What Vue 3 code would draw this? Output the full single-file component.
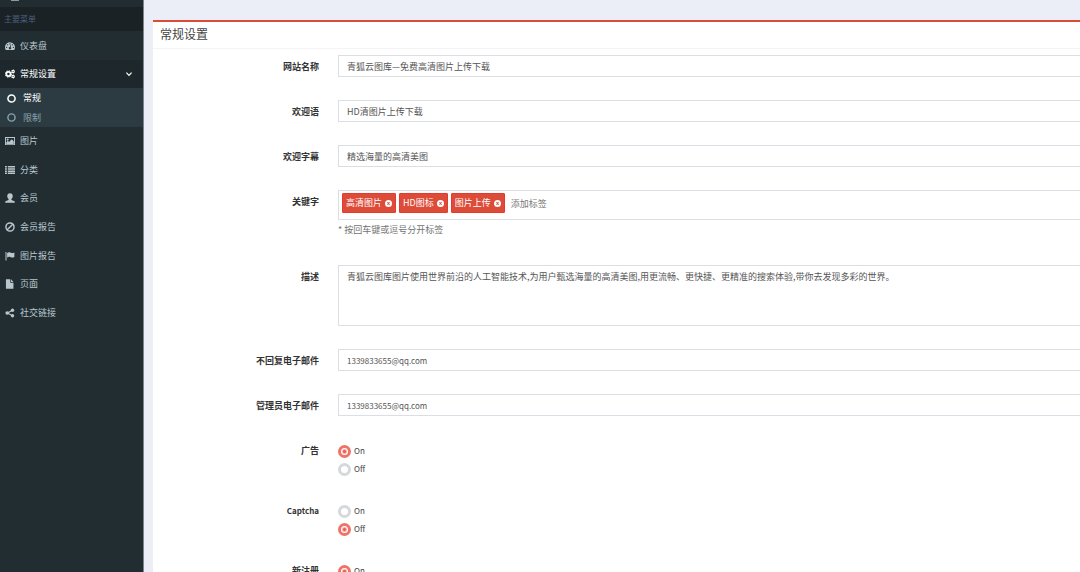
<script setup>
import { reactive } from 'vue'

const items = [
  { icon: 'image', label: '图片' },
  { icon: 'list', label: '分类' },
  { icon: 'user', label: '会员' },
  { icon: 'ban', label: '会员报告' },
  { icon: 'flag', label: '图片报告' },
  { icon: 'file', label: '页面' },
  { icon: 'share', label: '社交链接' },
]

const form = reactive({
  name: '青狐云图库—免费高清图片上传下载',
  welcome: 'HD清图片上传下载',
  subtitle: '精选海量的高清美图',
  tags: ['高清图片', 'HD图标', '图片上传'],
  description:
    '青狐云图库图片使用世界前沿的人工智能技术,为用户甄选海量的高清美图,用更流畅、更快捷、更精准的搜索体验,带你去发现多彩的世界。',
  noReply: '1339833655@qq.com',
  admin: '1339833655@qq.com',
  ads: 'On',
  captcha: 'Off',
  register: 'On',
})

const textRows = [
  { key: 'name', label: '网站名称' },
  { key: 'welcome', label: '欢迎语' },
  { key: 'subtitle', label: '欢迎字幕' },
]
const mailRows = [
  { key: 'noReply', label: '不回复电子邮件' },
  { key: 'admin', label: '管理员电子邮件' },
]
const radioRows = [
  { key: 'ads', label: '广告' },
  { key: 'captcha', label: 'Captcha', latin: true },
  { key: 'register', label: '新注册' },
]
</script>

<template>
  <div class="app">
    <aside class="sidebar">
      <div class="user-panel"><span class="avatar"></span></div>
      <div class="menu-header">主要菜单</div>
      <nav>
        <a href="#" class="item">
          <svg class="icon" viewBox="0 0 16 16"><path fill-rule="evenodd" d="M8 2a8 8 0 0 0-8 8c0 1.600.500 3 1.300 4.200h13.400A8 8 0 0 0 8 2zM8 3.500a1.100 1.100 0 1 1 0 2.200 1.100 1.100 0 0 1 0-2.200zM4.200 5a1.100 1.100 0 1 1 0 2.200 1.100 1.100 0 0 1 0-2.200zM11.800 5a1.100 1.100 0 1 1 0 2.200 1.100 1.100 0 0 1 0-2.200zM2.500 9a1.100 1.100 0 1 1 0 2.200A1.100 1.100 0 0 1 2.500 9zM13.500 9a1.100 1.100 0 1 1 0 2.200 1.100 1.100 0 0 1 0-2.200zM8.600 6.500l1 .3-.6 3a1.900 1.900 0 1 1-1.200-.3z" /></svg>
          <span>仪表盘</span>
        </a>
        <a href="#" class="item open">
          <svg class="icon" viewBox="0 0 16 16">
            <circle cx="5.500" cy="8" r="3.400" fill="none" stroke="currentColor" stroke-width="2.900" />
            <circle cx="5.500" cy="8" r="5.200" fill="none" stroke="currentColor" stroke-width="1.500" stroke-dasharray="2.080 2" />
            <circle cx="13" cy="4" r="1.800" fill="none" stroke="currentColor" stroke-width="1.700" />
            <circle cx="13" cy="4" r="2.700" fill="none" stroke="currentColor" stroke-width="1" stroke-dasharray="1.400 1.430" />
            <circle cx="13" cy="12" r="1.800" fill="none" stroke="currentColor" stroke-width="1.700" />
            <circle cx="13" cy="12" r="2.700" fill="none" stroke="currentColor" stroke-width="1" stroke-dasharray="1.400 1.430" />
          </svg>
          <span>常规设置</span>
          <svg class="chevron" viewBox="0 0 10 10"><path d="M2.400 3.700L5 6.300l2.600-2.600" fill="none" stroke="currentColor" stroke-width="1.200" /></svg>
        </a>
        <div class="submenu">
          <a href="#" class="sub current">
            <svg class="dot" viewBox="0 0 10 10"><circle cx="5" cy="5" r="4" fill="none" stroke="currentColor" stroke-width="1.700" /></svg>
            <span>常规</span>
          </a>
          <a href="#" class="sub">
            <svg class="dot" viewBox="0 0 10 10"><circle cx="5" cy="5" r="4" fill="none" stroke="currentColor" stroke-width="1.600" /></svg>
            <span>限制</span>
          </a>
        </div>
        <div class="rest">
          <a v-for="it in items" :key="it.icon" href="#" class="item">
            <svg class="icon" viewBox="0 0 16 16">
              <path v-if="it.icon === 'image'" fill-rule="evenodd" d="M0 1.500h16v13H0zM1.500 3v10h13V3zM4.200 4a1.700 1.700 0 1 1 0 3.400A1.700 1.700 0 0 1 4.200 4zM2 12.600V10l2.500-2.500 2 2L10.700 5 14 8.300v4.300z" />
              <path v-else-if="it.icon === 'list'" d="M0 1.600h3v2.400H0zM4.500 1.600H16v2.400H4.500zM0 5.100h3v2.400H0zM4.500 5.100H16v2.400H4.500zM0 8.600h3V11H0zM4.500 8.600H16V11H4.500zM0 12.100h3v2.400H0zM4.500 12.100H16v2.400H4.500z" />
              <path v-else-if="it.icon === 'user'" d="M8 .3c2.800 0 4.400 1.800 4.400 4.400 0 2-.9 3.700-2.200 4.700v1.100c0 .6.400.9 1 1.100l3.200 1.100c.9.300 1.300.9 1.300 1.700v1.200H.3v-1.200c0-.8.400-1.400 1.300-1.700l3.200-1.100c.6-.2 1-.5 1-1.100V9.400C4.500 8.400 3.600 6.700 3.600 4.700 3.600 2.100 5.200.3 8 .3z" />
              <g v-else-if="it.icon === 'ban'" fill="none" stroke="currentColor" stroke-width="2.300"><circle cx="8" cy="8" r="6.500" /><path d="M3.500 12.500l9-9" /></g>
              <path v-else-if="it.icon === 'flag'" d="M.8 1.500h1.600v13.500H.8zM3.400 3c2.300-1.300 4-1.200 5.800-.2 1.800.9 3.500.8 5.800-.6v7.300c-2.300 1.300-4 1.400-5.800.5-1.800-1-3.500-.9-5.800.5z" />
              <path v-else-if="it.icon === 'file'" d="M1.500.5h7V6h5v9.500h-12zM9.700.5l3.800 4.300H9.700z" />
              <g v-else><path d="M12 3.500L4 8l8 4.500" fill="none" stroke="currentColor" stroke-width="1.800" /><circle cx="12" cy="3.600" r="2.700" /><circle cx="3.500" cy="8" r="2.900" /><circle cx="12" cy="12.400" r="2.700" /></g>
            </svg>
            <span>{{ it.label }}</span>
          </a>
        </div>
      </nav>
    </aside>

    <main class="content">
      <section class="box">
        <h1 class="title">常规设置</h1>
        <form class="form" @submit.prevent>
          <div v-for="r in textRows" :key="r.key" class="group">
            <label class="label" :for="r.key">{{ r.label }}</label>
            <input :id="r.key" v-model="form[r.key]" class="control" type="text" />
          </div>
          <div class="group">
            <label class="label" for="tags">关键字</label>
            <div>
              <div class="tagbox">
                <span v-for="t in form.tags" :key="t" class="tag">
                  {{ t }}
                  <button type="button" class="remove" :aria-label="'移除 ' + t">
                    <svg viewBox="0 0 10 10"><circle cx="5" cy="5" r="5" fill="#fff" /><path d="M3.400 3.400l3.200 3.200M6.600 3.400L3.400 6.600" stroke="#dd4b39" stroke-width="1.500" /></svg>
                  </button>
                </span>
                <input id="tags" class="taginput" type="text" placeholder="添加标签" />
              </div>
              <p class="help">* 按回车键或逗号分开标签</p>
            </div>
          </div>
          <div class="group">
            <label class="label" for="description">描述</label>
            <textarea id="description" v-model="form.description" class="control area"></textarea>
          </div>
          <div v-for="r in mailRows" :key="r.key" class="group">
            <label class="label" :for="r.key">{{ r.label }}</label>
            <input :id="r.key" v-model="form[r.key]" class="control latin" type="email" />
          </div>
          <div v-for="r in radioRows" :key="r.key" class="group radios" role="radiogroup" :aria-labelledby="r.key">
            <span :id="r.key" class="label" :class="{ latin: r.latin }">{{ r.label }}</span>
            <div class="options">
              <label v-for="o in ['On', 'Off']" :key="o" class="option latin">
                <input v-model="form[r.key]" class="radio" type="radio" :name="r.key" :value="o" />
                <span>{{ o }}</span>
              </label>
            </div>
          </div>
        </form>
      </section>
    </main>
  </div>
</template>

<style>
body {
  margin: 0;
  background: #ebeef6;
}
</style>

<style scoped>
.app {
  display: flex;
  height: 100vh;
  overflow: hidden;
  font-family: "Noto Sans CJK SC", "Noto Sans", sans-serif;
  font-size: 9px;
  line-height: 14px;
  color: #444;
}
.app * {
  box-sizing: border-box;
}
.sidebar {
  flex: 0 0 144px;
  background: #222d32;
  border-right: 1px solid #7c858b;
}
.user-panel {
  height: 7px;
  padding-left: 11px;
}
.avatar {
  display: block;
  width: 8px;
  height: 1px;
  background: #8d979c;
}
.menu-header {
  padding: 5px 4px;
  background: #1a2226;
  color: #4b6079;
  font-size: 8px;
}
.item {
  display: flex;
  align-items: center;
  gap: 5px;
  min-height: 28px;
  padding: 0 9px 0 5px;
  color: #b8c7ce;
  text-decoration: none;
}
nav > .item:first-child {
  min-height: 29px;
}
.item.open {
  background: #1e282c;
  color: #fff;
}
.icon {
  flex: none;
  width: 10px;
  height: 10px;
  fill: currentColor;
}
.chevron {
  width: 10px;
  height: 10px;
  margin-left: auto;
}
.submenu {
  background: #2c3b41;
}
.sub {
  display: flex;
  align-items: center;
  gap: 7px;
  min-height: 19px;
  padding-left: 7px;
  color: #8aa4af;
  text-decoration: none;
}
.sub.current {
  min-height: 20px;
  color: #fff;
}
.dot {
  width: 9px;
  height: 9px;
}
.rest {
  display: grid;
  grid-auto-rows: 1fr;
  min-height: 200px;
}
.content {
  flex: 1;
  min-width: 0;
  padding: 20px 0 0 9px;
}
.box {
  background: #fff;
  border-top: 2px solid #dd4b39;
}
.title {
  margin: 0;
  padding: 4px 7px 6px;
  border-bottom: 1px solid #f4f4f4;
  font-size: 12px;
  font-weight: 400;
  line-height: 16px;
}
.form {
  padding-top: 6px;
}
.group {
  display: grid;
  grid-template-columns: 166px 1fr;
  column-gap: 19px;
  align-items: start;
  margin-bottom: 23px;
}
.label {
  padding: 5px 0 3px;
  font-weight: 700;
  color: #333;
  text-align: right;
}
.control {
  display: block;
  width: 100%;
  height: 22px;
  margin: 0;
  padding: 0 8px;
  border: 1px solid #dcdee6;
  border-right: 0;
  border-radius: 0;
  background: #fff;
  color: #555;
  font: inherit;
  outline: 0;
}
.latin {
  font-size: 8px;
}
.area {
  height: 61px;
  padding-top: 4px;
  resize: none;
}
.tagbox {
  display: flex;
  gap: 3px;
  min-height: 30px;
  padding: 2px 3px;
  border: 1px solid #dcdee6;
  border-right: 0;
}
.tag {
  display: flex;
  align-items: center;
  gap: 3px;
  height: 20px;
  padding: 0 3px;
  border: 1px solid #e83a2c;
  border-radius: 1px;
  background: #dd4b39;
  color: #fff;
  white-space: nowrap;
}
.remove {
  display: flex;
  width: 7px;
  height: 7px;
  padding: 0;
  border: 0;
  background: none;
}
.remove svg {
  width: 7px;
  height: 7px;
}
.taginput {
  flex: 1;
  min-width: 0;
  height: 20px;
  padding: 0 3px;
  border: 0;
  background: none;
  color: #555;
  font: inherit;
  outline: 0;
}
.taginput::placeholder {
  color: #777;
}
.help {
  margin: 3px 0 0;
  padding-bottom: 5px;
  color: #737373;
}
.radios {
  margin-bottom: 21px;
}
.options {
  padding-top: 3px;
}
.option {
  display: flex;
  align-items: center;
  gap: 3px;
  height: 18px;
}
.radio {
  appearance: none;
  width: 13px;
  height: 13px;
  margin: 0;
  border: 3px solid #d5d8dc;
  border-radius: 50%;
  background: #fff;
}
.radio:checked {
  border-color: #ee7468;
  background: radial-gradient(circle, #ee5f52 0 1px, #fff 3px) padding-box;
}
</style>
